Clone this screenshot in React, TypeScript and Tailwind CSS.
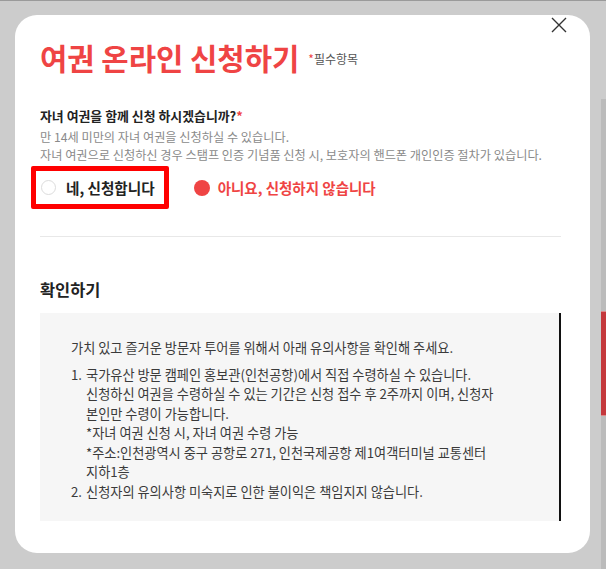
import React from "react";

const font = { fontFamily: '"Noto Sans CJK KR", "Noto Sans", sans-serif' };

export default function App() {
  return (
    <div
      className="w-[606px] h-[569px] bg-[#cccccc] border-t border-[#9a9a9a] flex overflow-hidden"
      style={font}
    >
      <div className="flex-1 pl-[15px] pt-[14px]">
        <div className="relative w-[575px] h-[538px] bg-white rounded-[22px] pl-[25px] pr-[29px] pt-[25px]">
          <button className="absolute top-[2px] right-[23px] w-[16px] h-[16px] text-[#333]">
            <svg viewBox="0 0 16 16" width="16" height="16" fill="none" stroke="currentColor" strokeWidth="1.4">
              <path d="M1 1 L15 15 M15 1 L1 15" />
            </svg>
          </button>

          <div className="flex items-center">
            <h1 className="text-[29.7px] leading-[36px] font-bold text-[#ef4444]">여권 온라인 신청하기</h1>
            <span className="ml-[9px] text-[12px] leading-[16px] text-[#555] mt-[2px]">
              <span className="text-[#ef4444]">*</span>필수항목
            </span>
          </div>

          <p className="mt-[31px] text-[12.9px] leading-[18px] font-bold text-[#222]">
            자녀 여권을 함께 신청 하시겠습니까?<span className="text-[#ef4444]">*</span>
          </p>
          <div className="mt-[4px] text-[12.2px] leading-[17.5px] text-[#8a8a8a]">
            <p>만 14세 미만의 자녀 여권을 신청하실 수 있습니다.</p>
            <p>자녀 여권으로 신청하신 경우 스탬프 인증 기념품 신청 시, 보호자의 핸드폰 개인인증 절차가 있습니다.</p>
          </div>

          <div className="mt-[2px] flex items-center">
            <div className="-ml-[9px] h-[43px] border-[5px] border-[#ff0000] rounded-[2px] flex items-center pl-[5px] pr-[9px]">
              <span className="w-[15px] h-[15px] rounded-full border border-[#dcdcdc] bg-white" />
              <span className="ml-[10px] text-[14.6px] leading-[20px] font-bold text-[#222]">네, 신청합니다</span>
            </div>
            <div className="ml-[25px] flex items-center">
              <span className="w-[16px] h-[16px] rounded-full bg-[#ef4444]" />
              <span className="ml-[8px] text-[14.5px] leading-[20px] font-bold text-[#ef4444]">
                아니요, 신청하지 않습니다
              </span>
            </div>
          </div>

          <div className="mt-[27px] h-px bg-[#e8e8e8]" />

          <h2 className="mt-[41px] text-[16.4px] leading-[22px] font-bold text-[#222]">확인하기</h2>

          <div className="mt-[13px] h-[208px] bg-[#f6f6f6] border-r-2 border-[#111] pl-[31px] pt-[25px] text-[13.2px] leading-[19.5px] text-[#3a3a3a]">
            <p>가치 있고 즐거운 방문자 투어를 위해서 아래 유의사항을 확인해 주세요.</p>
            <div className="mt-[7px]">
              <div className="flex">
                <span className="w-[15px] shrink-0">1.</span>
                <div>
                  <p>국가유산 방문 캠페인 홍보관(인천공항)에서 직접 수령하실 수 있습니다.</p>
                  <p>신청하신 여권을 수령하실 수 있는 기간은 신청 접수 후 2주까지 이며, 신청자</p>
                  <p>본인만 수령이 가능합니다.</p>
                  <p>*자녀 여권 신청 시, 자녀 여권 수령 가능</p>
                  <p>*주소:인천광역시 중구 공항로 271, 인천국제공항 제1여객터미널 교통센터</p>
                  <p>지하1층</p>
                </div>
              </div>
              <div className="flex">
                <span className="w-[15px] shrink-0">2.</span>
                <p>신청자의 유의사항 미숙지로 인한 불이익은 책임지지 않습니다.</p>
              </div>
            </div>
          </div>
        </div>
      </div>

      <div className="w-[5px] flex flex-col">
        <div className="h-[98px]" />
        <div className="h-[212px] bg-[#bbbbbb]" />
        <div className="h-[105px] bg-[#c4383c] border-y border-[#d88]" />
        <div className="flex-1 bg-[#bbbbbb]" />
      </div>
    </div>
  );
}
